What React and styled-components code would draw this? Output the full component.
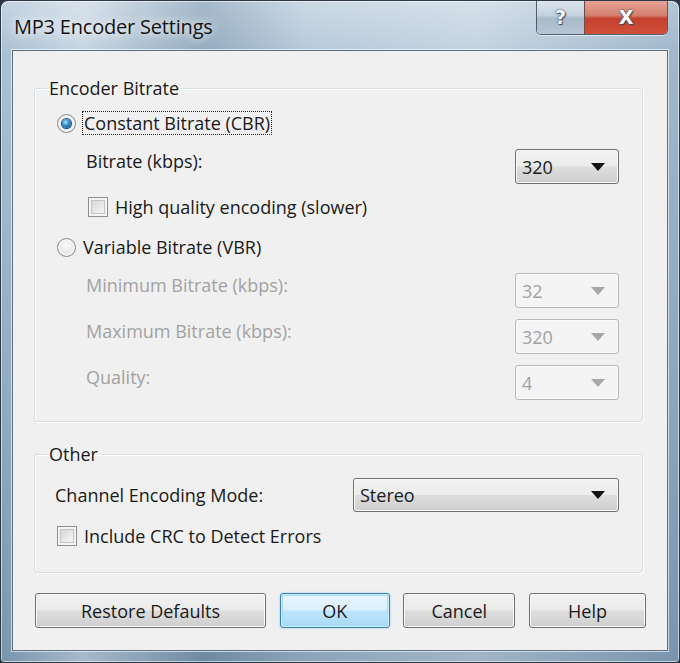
import React from "react";
import styled, { createGlobalStyle, css } from "styled-components";

const Global = createGlobalStyle`
  html, body { margin: 0; padding: 0; background: #2a3540; }
  body { width: 680px; height: 663px; overflow: hidden; }
  * { box-sizing: border-box; }
`;

const FONT = `"Open Sans", "Noto Sans", "Liberation Sans", sans-serif`;

const Window = styled.div`
  width: 680px;
  height: 663px;
  display: flex;
  flex-direction: column;
  border: 1px solid #2d3944;
  border-radius: 8px 8px 4px 4px;
  background:
    linear-gradient(90deg, rgba(255,255,255,0) 0%, rgba(255,255,255,0.35) 12%, rgba(80,110,135,0.25) 30%, rgba(255,255,255,0.15) 45%, rgba(255,255,255,0.3) 70%, rgba(120,150,175,0.2) 100%),
    linear-gradient(180deg, #c3d3e1 0%, #a9bfd2 8%, #8ea9c0 60%, #7894ad 100%);
  box-shadow: inset 0 0 0 1px rgba(255,255,255,0.55);
  padding: 0 11px 11px 11px;
  font-family: ${FONT};
  overflow: hidden;
`;

const TitleBar = styled.div`
  height: 49px;
  display: flex;
  align-items: flex-start;
  justify-content: space-between;
`;

const Title = styled.div`
  font-size: 20px;
  color: #141414;
  padding: 12px 0 0 2px;
  letter-spacing: -0.2px;
  text-shadow: 0 0 8px rgba(255,255,255,0.9), 0 0 14px rgba(255,255,255,0.7);
`;

const CaptionButtons = styled.div`
  display: flex;
  margin-top: -1px;
  border: 1px solid #4f5f70;
  border-top: none;
  border-radius: 0 0 5px 5px;
  overflow: hidden;
  box-shadow: 0 1px 0 rgba(255,255,255,0.6);
`;

const CaptionButton = styled.div`
  height: 34px;
  display: flex;
  align-items: center;
  justify-content: center;
  color: #fff;
  font-family: "DejaVu Sans", sans-serif;
  font-weight: bold;
  ${(p) =>
    p.$close
      ? css`
          width: 83px;
          background: linear-gradient(180deg, #e7a597 0%, #d4806f 45%, #c4402c 55%, #d0503c 100%);
          font-size: 19px;
          border-left: 1px solid #6a4a48;
        `
      : css`
          width: 47px;
          background: linear-gradient(180deg, #dfe7ee 0%, #c4d2de 45%, #a8b9c8 55%, #b7c7d4 100%);
          font-size: 19px;
          color: #fbfdff;
        `}
  text-shadow: 0 0 2px #3c4a58, 0 0 1px #3c4a58, 1px 1px 1px #3c4a58;
`;

const Client = styled.div`
  flex: 1;
  background: #f0f0f0;
  border: 1px solid #5d6f80;
  box-shadow: 0 0 0 1px rgba(255,255,255,0.6);
  display: flex;
  flex-direction: column;
  padding: 26px 24px 0 21px;
  font-size: 18px;
  color: #1a1a1a;
`;

const Group = styled.fieldset`
  margin: 0;
  padding: 12px 23px ${(p) => p.$pb || 19}px 22px;
  border: 1px solid #d5dfe5;
  border-radius: 3px;
  box-shadow: inset 1px 1px 0 #fff, 1px 1px 0 #fff;
  display: flex;
  flex-direction: column;
  min-width: 0;
  & + & { margin-top: 21px; }
`;

const Legend = styled.legend`
  padding: 0 2px;
  margin-left: -10px;
  line-height: 22px;
  font-size: 18px;
  color: #1a1a1a;
`;

const Row = styled.div`
  display: flex;
  align-items: ${(p) => p.$align || "center"};
  justify-content: space-between;
  height: ${(p) => p.$h || 24}px;
  margin-top: ${(p) => p.$mt || 0}px;
  padding-left: ${(p) => p.$indent || 0}px;
`;

const Label = styled.span`
  line-height: 24px;
  color: ${(p) => (p.$disabled ? "#a2a2a2" : "#1a1a1a")};
  white-space: nowrap;
  margin-left: ${(p) => p.$ml || 0}px;
`;

const Option = styled.label`
  display: flex;
  align-items: center;
  gap: 7px;
  white-space: nowrap;
`;

const Focus = styled.span`
  line-height: 22px;
  padding: 0 1px;
  outline: 1px dotted #222;
  outline-offset: 0px;
`;

const RadioDot = styled.span`
  width: 19px;
  height: 19px;
  border-radius: 50%;
  border: 1px solid #8a8a8a;
  background: radial-gradient(circle at 50% 40%, #fafafa 0%, #e2e2e2 70%, #cfcfcf 100%);
  box-shadow: inset 0 0 0 2px #f4f4f4;
  display: flex;
  align-items: center;
  justify-content: center;
  flex: none;
  &::after {
    content: "";
    width: 9px;
    height: 9px;
    border-radius: 50%;
    display: ${(p) => (p.$checked ? "block" : "none")};
    background: radial-gradient(circle at 40% 35%, #a9e3ff 0%, #2d88c6 45%, #0b4a7d 100%);
    box-shadow: 0 0 0 1px #1c5180;
  }
`;

const CheckBox = styled.span`
  width: 20px;
  height: 20px;
  border: 1px solid #8e8f8f;
  background: linear-gradient(135deg, #cfcfcf 0%, #e9e9e9 55%, #fbfbfb 100%);
  box-shadow: inset 0 0 0 2px #f4f4f4, inset 0 0 0 3px #c3c3c3;
  flex: none;
`;

const Combo = styled.div`
  width: ${(p) => p.$w || 104}px;
  height: ${(p) => p.$h || 35}px;
  border-radius: 3px;
  display: flex;
  align-items: center;
  justify-content: space-between;
  padding: 0 13px 0 6px;
  flex: none;
  ${(p) =>
    p.$disabled
      ? css`
          border: 1px solid #b4b8ba;
          background: #f4f4f4;
          color: #a2a2a2;
          box-shadow: inset 0 0 0 1px #fbfbfb;
        `
      : css`
          border: 1px solid #707070;
          background: linear-gradient(180deg, #f3f3f3 0%, #ebebeb 49%, #dddddd 51%, #cfcfcf 100%);
          color: #1a1a1a;
          box-shadow: inset 0 0 0 1px #fafafa;
        `}
`;

const Arrow = styled.span`
  width: 0;
  height: 0;
  border-left: 7px solid transparent;
  border-right: 7px solid transparent;
  border-top: 8px solid ${(p) => (p.$disabled ? "#a8a8a8" : "#111")};
`;

const ButtonRow = styled.div`
  display: flex;
  margin-top: 20px;
  margin-right: -3px;
  margin-left: 1px;
  justify-content: space-between;
`;

const Button = styled.div`
  width: ${(p) => p.$w}px;
  height: 35px;
  border-radius: 3px;
  display: flex;
  align-items: center;
  justify-content: center;
  font-size: 18px;
  color: #1a1a1a;
  ${(p) =>
    p.$default
      ? css`
          border: 1px solid #3c7fb1;
          background: linear-gradient(180deg, #eaf6fd 0%, #d9f0fc 49%, #bee6fd 51%, #a7d9f5 100%);
          box-shadow: inset 0 0 0 1px #cbeeff, inset 0 0 0 2px #a6dcf5, 0 0 2px #7dc4ea;
        `
      : css`
          border: 1px solid #707070;
          background: linear-gradient(180deg, #f2f2f2 0%, #ebebeb 49%, #dddddd 51%, #cfcfcf 100%);
          box-shadow: inset 0 0 0 1px #fcfcfc;
        `}
`;

const ComboField = ({ value, disabled, w, h }) => (
  <Combo $disabled={disabled} $w={w} $h={h}>
    <span>{value}</span>
    <Arrow $disabled={disabled} />
  </Combo>
);

export default function App() {
  return (
    <>
      <Global />
      <Window>
        <TitleBar>
          <Title>MP3 Encoder Settings</Title>
          <CaptionButtons>
            <CaptionButton>?</CaptionButton>
            <CaptionButton $close>X</CaptionButton>
          </CaptionButtons>
        </TitleBar>
        <Client>
          <Group $pb={21}>
            <Legend>Encoder Bitrate</Legend>
            <Row>
              <Option>
                <RadioDot $checked />
                <Focus>Constant Bitrate (CBR)</Focus>
              </Option>
            </Row>
            <Row $h={35} $mt={14} $align="flex-start" $indent={29}>
              <Label>Bitrate (kbps):</Label>
              <ComboField value="320" />
            </Row>
            <Row $mt={11} $indent={31}>
              <Option>
                <CheckBox />
                <Label>High quality encoding (slower)</Label>
              </Option>
            </Row>
            <Row $mt={16}>
              <Option>
                <RadioDot />
                <Label>Variable Bitrate (VBR)</Label>
              </Option>
            </Row>
            <Row $h={35} $mt={14} $align="flex-start" $indent={29}>
              <Label $disabled>Minimum Bitrate (kbps):</Label>
              <ComboField value="32" disabled />
            </Row>
            <Row $h={35} $mt={11} $align="flex-start" $indent={29}>
              <Label $disabled>Maximum Bitrate (kbps):</Label>
              <ComboField value="320" disabled />
            </Row>
            <Row $h={35} $mt={11} $align="flex-start" $indent={29}>
              <Label $disabled>Quality:</Label>
              <ComboField value="4" disabled />
            </Row>
          </Group>
          <Group $pb={24}>
            <Legend>Other</Legend>
            <Row $h={34} $mt={1}>
              <Label $ml={-2}>Channel Encoding Mode:</Label>
              <ComboField value="Stereo" w={266} h={34} />
            </Row>
            <Row $mt={12}>
              <Option>
                <CheckBox />
                <Label>Include CRC to Detect Errors</Label>
              </Option>
            </Row>
          </Group>
          <ButtonRow>
            <Button $w={231}>Restore Defaults</Button>
            <Button $w={110} $default>OK</Button>
            <Button $w={112}>Cancel</Button>
            <Button $w={117}>Help</Button>
          </ButtonRow>
        </Client>
      </Window>
    </>
  );
}
